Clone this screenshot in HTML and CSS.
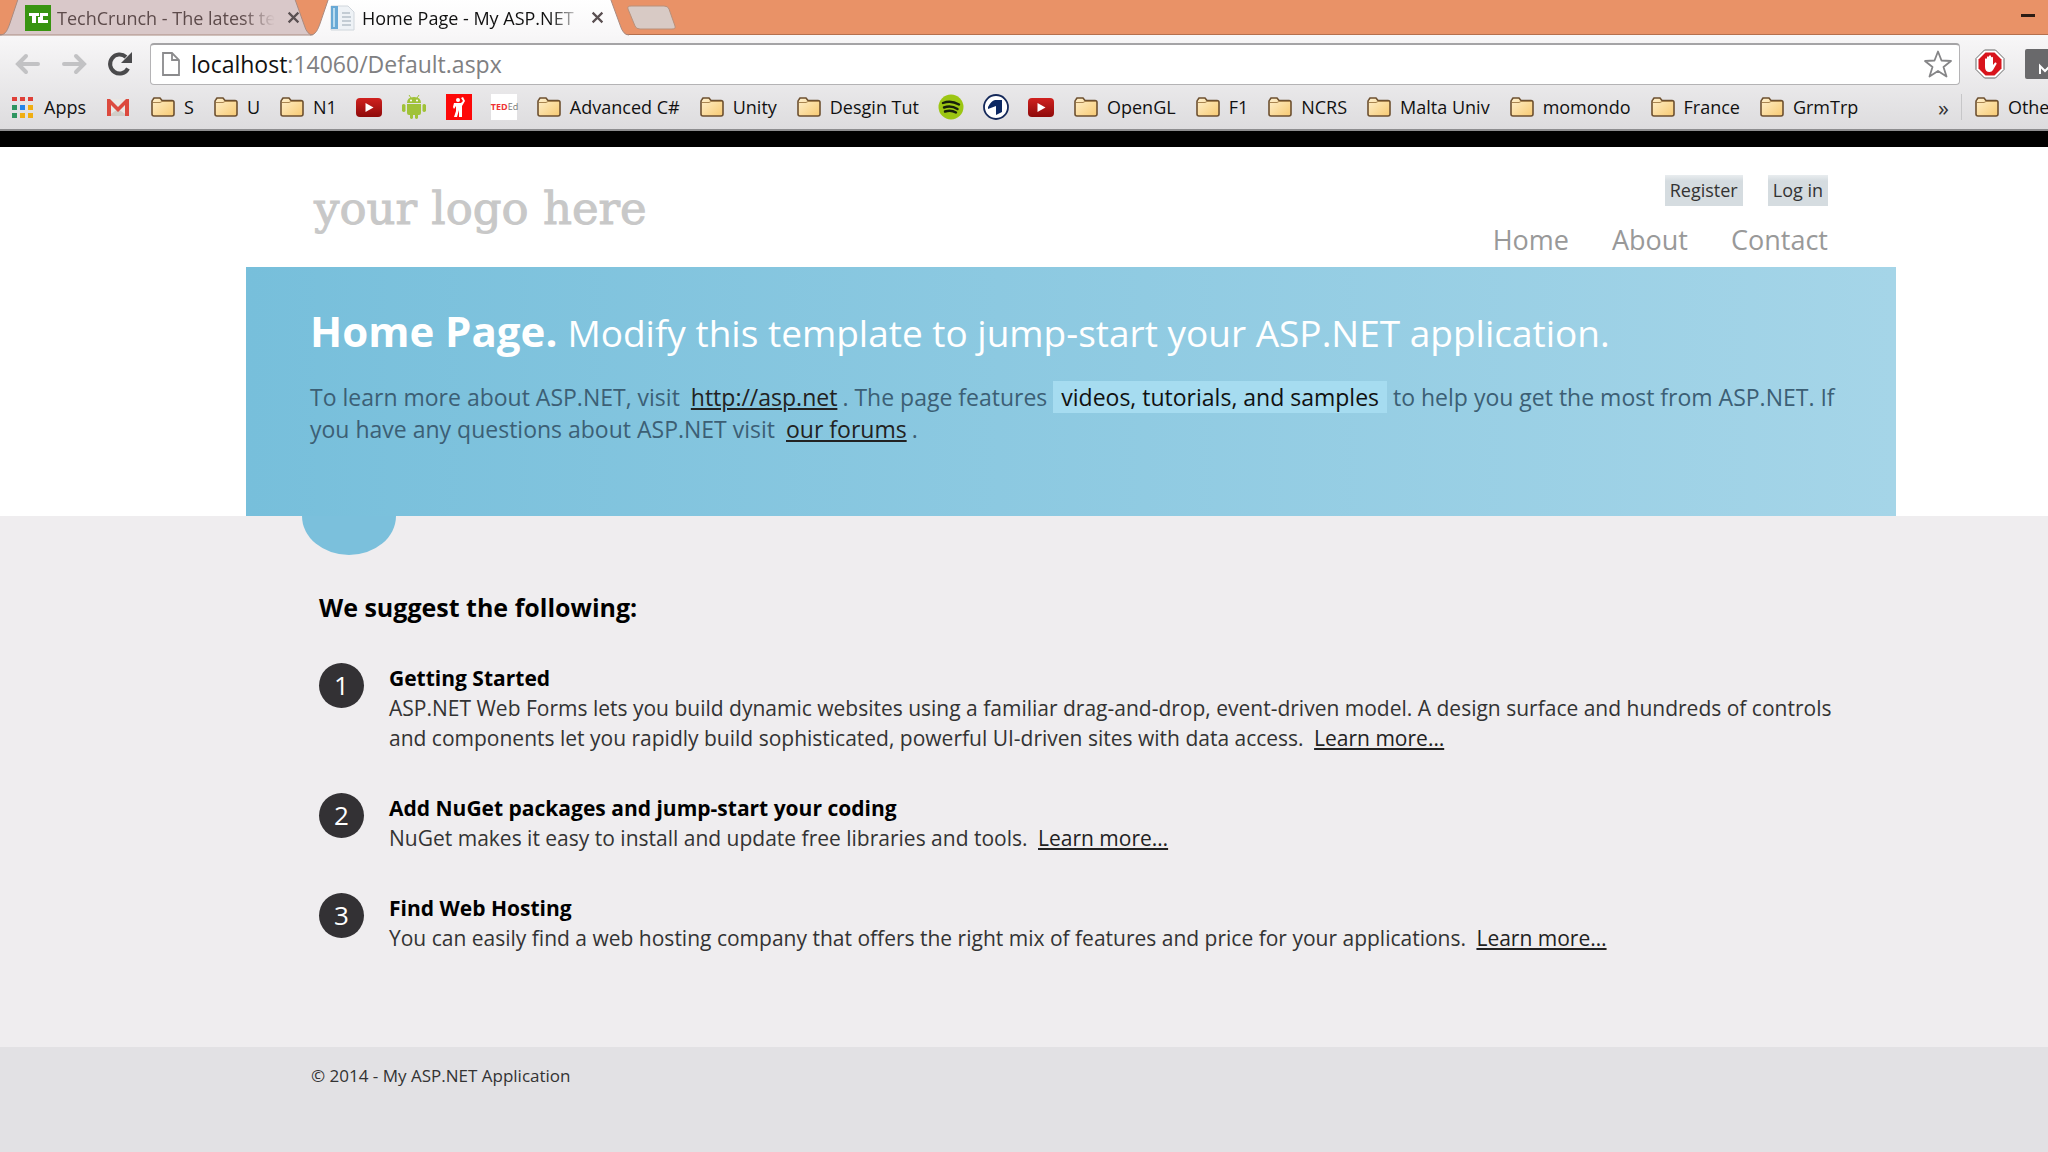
FILE: index.html
```html
<!DOCTYPE html>
<html lang="en">
<head>
<meta charset="utf-8">
<title>Home Page - My ASP.NET Application</title>
<link rel="stylesheet" href="styles.css">
</head>
<body>
<svg class="defs" aria-hidden="true">
  <defs>
    <linearGradient id="fold" x1="0" y1="0" x2="1" y2="1"><stop offset="0" stop-color="#fff0cd"/><stop offset="1" stop-color="#f7ca72"/></linearGradient>
    <linearGradient id="tube" x1="0" y1="0" x2="0" y2="1"><stop offset="0" stop-color="#d0211f"/><stop offset="1" stop-color="#8e0a0a"/></linearGradient>
    <linearGradient id="tabfill" x1="0" y1="0" x2="0" y2="1"><stop offset="0" stop-color="#ffffff"/><stop offset="1" stop-color="#f8f7f8"/></linearGradient>
  </defs>
  <symbol id="folder" viewBox="0 0 26 26"><path d="M2 20V7.500Q2 6.500 3 5.500L4 4H10L12 6.500H22Q24 6.500 24 8.500V20Q24 22 22 22H4Q2 22 2 20Z" fill="url(#fold)" stroke="#6d5030" stroke-width="1.600"/><path d="M3 8.500H10L12 7.500H23" fill="none" stroke="#a98550" stroke-width="1"/></symbol>
  <symbol id="youtube" viewBox="0 0 26 26"><rect x="0" y="4" width="26" height="19" rx="4" fill="url(#tube)"/><path d="M9.500 9V18L17.500 13.500Z" fill="#fff"/></symbol>
</svg>

<header class="browser">
  <nav class="tabs" aria-label="Tabs">
    <div class="tab tab-back">
      <svg class="tab-shape" viewBox="0 0 320 35" preserveAspectRatio="none" aria-hidden="true"><path d="M0 35C6 35 8 29 10 24L19 -2H304L314 25Q317 35 323 35Z" fill="#d9c8c9" stroke="#a98a80"/></svg>
      <svg class="fav" viewBox="0 0 26 26" aria-hidden="true"><path d="M0 0H26V26H0Z" fill="#389410"/><path d="M4 8H14V11H11V18H7V11H4ZM15 8H23V11H18V15H23V18H13V12H15Z" fill="#fff"/></svg>
      <a class="tab-title" href="#">TechCrunch - The latest te</a>
      <button class="close" aria-label="Close tab"><svg viewBox="0 0 12 12"><path d="M1.500 1.500L10.500 10.500M10.500 1.500L1.500 10.500"/></svg></button>
    </div>
    <div class="tab tab-front">
      <svg class="tab-shape" viewBox="0 0 320 35" preserveAspectRatio="none" aria-hidden="true"><path d="M0 35.500C6 35 8 29 10 24L19 -2H304L314 25Q317 35 323 35.500Z" fill="url(#tabfill)"/><path d="M0 35C6 35 8 29 10 24L19 -2M304 -2L314 25Q317 35 323 35" fill="none" stroke="#a98a80"/></svg>
      <svg class="fav" viewBox="0 0 26 26" aria-hidden="true"><path d="M1 1H18L24 7V25H1Z" fill="#eef2f6" stroke="#d0d6dc"/><path d="M1 1H8V24H1Z" fill="#69a9d5"/><path d="M3 3H5V22H3Z" fill="#b9dcf0"/><path d="M12 8H20M12 12H21M12 16H21M12 20H21" stroke="#c3ccd4" stroke-width="2"/></svg>
      <a class="tab-title" href="#">Home Page - My ASP.NET</a>
      <button class="close" aria-label="Close tab"><svg viewBox="0 0 12 12"><path d="M1.500 1.500L10.500 10.500M10.500 1.500L1.500 10.500"/></svg></button>
    </div>
    <button class="new-tab" aria-label="New tab"><svg viewBox="0 0 52 26"><path d="M5 1H38Q42 1 43 4L49 21Q50 24 46 24H14Q10 24 9 21L2 4Q1 1 5 1Z" fill="#d8cac5" stroke="#b9907a"/></svg></button>
    <button class="minimize" aria-label="Minimize"></button>
  </nav>

  <div class="toolbar">
    <button class="tool" aria-label="Back"><svg viewBox="0 0 28 28"><path d="M24 14H5M12 6L4 14L12 22" fill="none" stroke="#c2c2c4" stroke-width="4" stroke-linecap="round"/></svg></button>
    <button class="tool" aria-label="Forward"><svg viewBox="0 0 28 28"><path d="M4 14H23M16 6L24 14L16 22" fill="none" stroke="#c2c2c4" stroke-width="4" stroke-linecap="round"/></svg></button>
    <button class="tool" aria-label="Reload"><svg viewBox="0 0 28 28"><path d="M22 18.500A9.500 9.500 0 1 1 20 7" fill="none" stroke="#4a4a4c" stroke-width="4"/><path d="M26 2V13H15Z" fill="#4a4a4c"/></svg></button>
    <div class="omnibox">
      <svg class="doc" viewBox="0 0 20 26" aria-hidden="true"><path d="M2 2H11L18 9V24H2ZM11 2V9H18" fill="#fff" stroke="#8b8b8d" stroke-width="1.800"/></svg>
      <a class="url" href="#"><span>localhost</span>:14060/Default.aspx</a>
      <button class="star" aria-label="Bookmark this page"><svg viewBox="0 0 30 30"><path d="M15 2.500L18.500 11.500L28 12L20.500 18L23.500 27.500L15 22L6.500 27.500L9.500 18L2 12L11.500 11.500Z" fill="#fff" stroke="#858587" stroke-width="1.800" stroke-linejoin="round"/></svg></button>
    </div>
    <button class="ext" aria-label="Ad blocker"><svg viewBox="0 0 30 30"><path d="M9.500 1H20.500L29 9.500V20.500L20.500 29H9.500L1 20.500V9.500Z" fill="#fff" stroke="#666"/><path d="M10.500 3.500H19.500L26.500 10.500V19.500L19.500 26.500H10.500L3.500 19.500V10.500Z" fill="#d8141c"/><path d="M10 18V10Q11 8.500 12 10V14V8Q13 6.500 14 8V13V7Q15 5.500 16 7V13V8.500Q17 7 18 8.500V16L20 13.500Q22 13 21.500 15L18 21Q17 23 14.500 23Q10 23 10 18Z" fill="#fff"/></svg></button>
    <button class="ext-mail" aria-label="Mail"><svg viewBox="0 0 40 30"><path d="M0 2Q0 0 2 0H40V30H2Q0 30 0 28Z" fill="#69696b"/><path d="M15 25V17L20 22L25 17V25" fill="none" stroke="#fff" stroke-width="2"/></svg></button>
  </div>

  <nav class="bookmarks" aria-label="Bookmarks">
    <a href="#"><svg viewBox="0 0 26 26"><path d="M2 3H7V7H2ZM10 3H15V7H10ZM18 3H23V7H18Z" fill="#df4038"/><path d="M2 11H7V16H2Z" fill="#2e9560"/><path d="M10 11H15V16H10Z" fill="#2384ea"/><path d="M18 11H23V16H18ZM10 19H15V24H10ZM18 19H23V24H18Z" fill="#f0ae12"/><path d="M2 19H7V24H2Z" fill="#2e9560"/></svg>Apps</a>
    <a href="#" aria-label="Gmail"><svg viewBox="0 0 26 26"><path d="M2 5H24V22H2Z" fill="#e9e7e4"/><path d="M13 15L23 22H3Z" fill="#d0cec8"/><path d="M2 22V5H5L13 13L21 5H24V22H20V11L13 18L6 11V22Z" fill="#dc4a3e"/></svg></a>
    <a href="#"><svg><use href="#folder"/></svg>S</a>
    <a href="#"><svg><use href="#folder"/></svg>U</a>
    <a href="#"><svg><use href="#folder"/></svg>N1</a>
    <a href="#" aria-label="YouTube"><svg><use href="#youtube"/></svg></a>
    <a href="#" aria-label="Android"><svg viewBox="0 0 26 26"><path d="M6 9Q6 3 13 3Q20 3 20 9ZM6 10H20V19Q20 21 18 21H17V24Q15.500 26 14 24V21H12V24Q10.500 26 9 24V21H8Q6 21 6 19ZM1 11Q2.500 9 4.500 11V17Q3 19 1 17ZM21.500 11Q23 9 25 11V17Q23 19 21.500 17Z" fill="#a0c238"/><path d="M8 1L10 4M18 1L16 4" stroke="#a0c238"/><circle cx="10" cy="6.500" r="1" fill="#fff"/><circle cx="16" cy="6.500" r="1" fill="#fff"/></svg></a>
    <a href="#" aria-label="Runner"><svg viewBox="0 0 26 26"><path d="M0 0H26V26H0Z" fill="#fd0808"/><circle cx="12" cy="6" r="2" fill="#fff"/><path d="M8 9H15L17 7L15 4L17 3L19 7L16 12V23H13V16L11 23H8L10 17V12L8 15L7 13Z" fill="#fff"/></svg></a>
    <a href="#" class="ted" aria-label="TED-Ed"><span>TED<i>Ed</i></span></a>
    <a href="#"><svg><use href="#folder"/></svg>Advanced C#</a>
    <a href="#"><svg><use href="#folder"/></svg>Unity</a>
    <a href="#"><svg><use href="#folder"/></svg>Desgin Tut</a>
    <a href="#" aria-label="Spotify"><svg viewBox="0 0 26 26"><circle cx="13" cy="13" r="12.500" fill="#9cc613"/><path d="M5 9Q13 6 21 10.500M6 13.500Q13 11 19.500 15M7 17.500Q13 15.500 18 18.500" fill="none" stroke="#17200b" stroke-width="2.400" stroke-linecap="round"/></svg></a>
    <a href="#" aria-label="Das Erste"><svg viewBox="0 0 26 26"><circle cx="13" cy="13" r="12" fill="#fff" stroke="#15295a" stroke-width="1.800"/><path d="M5 13Q8 7 12 6H19V18L13 21V12L5 15Z" fill="#0c2862"/></svg></a>
    <a href="#" aria-label="YouTube"><svg><use href="#youtube"/></svg></a>
    <a href="#"><svg><use href="#folder"/></svg>OpenGL</a>
    <a href="#"><svg><use href="#folder"/></svg>F1</a>
    <a href="#"><svg><use href="#folder"/></svg>NCRS</a>
    <a href="#"><svg><use href="#folder"/></svg>Malta Univ</a>
    <a href="#"><svg><use href="#folder"/></svg>momondo</a>
    <a href="#"><svg><use href="#folder"/></svg>France</a>
    <a href="#"><svg><use href="#folder"/></svg>GrmTrp</a>
    <div class="overflow">
      <button class="more" aria-label="More bookmarks">»</button>
      <a class="other" href="#"><svg><use href="#folder"/></svg>Other</a>
    </div>
  </nav>
</header>

<div class="site">
  <header class="masthead">
    <a class="logo" href="#">your logo here</a>
    <div class="menus">
      <nav class="account" aria-label="Account"><a href="#">Register</a><a href="#">Log in</a></nav>
      <nav class="menu" aria-label="Main"><a href="#">Home</a><a href="#">About</a><a href="#">Contact</a></nav>
    </div>
  </header>

  <section class="featured">
    <div class="banner">
      <div class="title"><h1>Home Page.</h1><h2>Modify this template to jump-start your ASP.NET application.</h2></div>
      <p>To learn more about ASP.NET, visit <a href="#">http://asp.net</a>. The page features <mark>videos, tutorials, and samples</mark> to help you get the most from ASP.NET. If you have any questions about ASP.NET visit <a href="#">our forums</a>.</p>
    </div>
  </section>

  <main>
    <h3>We suggest the following:</h3>
    <ol>
      <li><h4>Getting Started</h4><p>ASP.NET Web Forms lets you build dynamic websites using a familiar drag-and-drop, event-driven model. A design surface and hundreds of controls and components let you rapidly build sophisticated, powerful UI-driven sites with data access. <a href="#">Learn more…</a></p></li>
      <li><h4>Add NuGet packages and jump-start your coding</h4><p>NuGet makes it easy to install and update free libraries and tools. <a href="#">Learn more…</a></p></li>
      <li><h4>Find Web Hosting</h4><p>You can easily find a web hosting company that offers the right mix of features and price for your applications. <a href="#">Learn more…</a></p></li>
    </ol>
  </main>

  <footer>© 2014 - My ASP.NET Application</footer>
</div>
</body>
</html>
```
FILE: styles.css
```css
* {
  box-sizing: border-box;
}

body {
  margin: 0;
  min-height: 100vh;
  display: flex;
  flex-direction: column;
  overflow-x: hidden;
  background: #e2e1e4;
  color: #333;
  font-family: "Open Sans", "Noto Sans", sans-serif;
}

h1, h2, h3, h4, p, ol {
  margin: 0;
  padding: 0;
}

button {
  flex: none;
  padding: 0;
  border: 0;
  background: none;
  font: inherit;
}

svg {
  display: block;
  flex: none;
}

.defs {
  position: absolute;
  width: 0;
  height: 0;
}

/* Browser window */
.browser {
  background: linear-gradient(#f8f7f8 35px, #dddcde);
  border-bottom: 2px solid #8d8d8f;
  white-space: nowrap;
  overflow: hidden;
}

.browser a {
  color: #111;
  text-decoration: none;
}

.tabs {
  display: flex;
  height: 35px;
  background: #e99267;
  border-bottom: 1px solid #b5704e;
}

.tab {
  position: relative;
  display: flex;
  align-items: center;
  flex: none;
  width: 310px;
  height: 35px;
  padding: 0 10px 0 25px;
  font-size: 18px;
}

.tab-front {
  width: 316px;
  padding: 0 22px 0 20px;
}

.tab-shape {
  position: absolute;
  left: 0;
  top: 0;
  width: 100%;
  height: 35px;
  overflow: visible;
}

.fav {
  position: relative;
  width: 26px;
  height: 26px;
}

.browser .tab-title {
  position: relative;
  flex: 1;
  min-width: 0;
  margin: 0 12px 0 6px;
  overflow: hidden;
  mask-image: linear-gradient(90deg, #000 85%, transparent);
}

.browser .tab-front .tab-title {
  margin-right: 8px;
}

.browser .tab-back .tab-title {
  color: #5d4b4b;
}

.close {
  position: relative;
}

.close svg {
  width: 13px;
  height: 13px;
  fill: none;
  stroke: #5a5052;
  stroke-width: 2;
}

.new-tab svg {
  width: 52px;
  height: 26px;
}

.new-tab {
  align-self: flex-start;
  padding-top: 5px;
}

.minimize {
  width: 14px;
  height: 3px;
  margin: 14px 13px 0 auto;
  background: #2c1c14;
}

.toolbar {
  display: flex;
  align-items: center;
  height: 57px;
}

.tool {
  padding-left: 14px;
}

.tool:nth-child(n+2) {
  padding-left: 18px;
}

.tool svg {
  width: 28px;
  height: 28px;
}

.omnibox {
  flex: 1;
  min-width: 0;
  display: flex;
  align-items: center;
  height: 42px;
  margin-left: 16px;
  padding: 0 6px 0 10px;
  background: #fff;
  border: 1px solid #b4b3b5;
  border-top: 2px solid #a5a4a6;
  border-radius: 4px;
}

.doc {
  width: 20px;
  height: 26px;
}

.browser .url {
  flex: 1;
  margin-left: 10px;
  font-size: 23px;
  color: #808082;
}

.url span {
  color: #111;
}

.star svg,
.ext svg {
  width: 30px;
  height: 30px;
}

.ext {
  margin: 0 20px 0 15px;
}

.ext-mail {
  width: 23px;
  overflow: hidden;
}

.ext-mail svg {
  width: 40px;
  height: 30px;
}

.bookmarks {
  display: flex;
  align-items: center;
  gap: 19px;
  height: 37px;
  padding: 0 0 7px 10px;
  font-size: 18px;
}

.bookmarks a {
  display: flex;
  align-items: center;
  gap: 8px;
  flex: none;
}

.bookmarks svg {
  width: 26px;
  height: 26px;
}

.ted span {
  width: 26px;
  height: 26px;
  background: #fff;
  color: #e33;
  font-size: 9px;
  font-weight: 700;
  line-height: 26px;
  text-align: center;
}

.ted i {
  color: #777;
  font-style: normal;
  font-weight: 400;
}

.overflow {
  flex: none;
  display: flex;
  align-items: center;
  width: 110px;
  margin-left: auto;
}

.more {
  font-size: 22px;
  line-height: 26px;
  color: #333;
}

.other {
  margin-left: 12px;
  padding-left: 12px;
  border-left: 1px solid #c6c6c8;
}

/* Site */
.site {
  flex: 1;
  border-top: 16px solid #000;
}

.masthead {
  display: flex;
  justify-content: space-between;
  height: 120px;
  padding: 0 220px 0 314px;
  background: #fff;
}

.masthead a {
  text-decoration: none;
}

.logo {
  padding-top: 32px;
  color: #c8c8c8;
  font: 45px/60px "DejaVu Serif", serif;
  -webkit-text-stroke: 1px #c8c8c8;
}

.menus {
  display: flex;
  flex-direction: column;
  align-items: flex-end;
}

.account {
  display: flex;
  gap: 25px;
  margin-top: 28px;
}

.account a {
  padding: 0 5px;
  background: linear-gradient(#e9edef, #d5dce0 6px);
  color: #333;
  font-size: 18px;
  line-height: 31px;
}

.menu {
  display: flex;
  gap: 43px;
  margin-top: 16px;
  font-size: 27px;
  line-height: 36px;
}

.menu a {
  color: #999;
}

.featured {
  padding: 0 152px 0 246px;
  background: #fff;
}

.banner {
  position: relative;
  min-height: 249px;
  padding: 39px 60px 0 64px;
  background: linear-gradient(90deg, #77bfdb, #a5d5e8);
  color: #3c5f75;
}

.banner::after {
  content: "";
  position: absolute;
  left: 56px;
  top: 100%;
  width: 94px;
  height: 39px;
  background: #7bc0dc;
  border-radius: 0 0 47px 47px / 0 0 39px 39px;
}

.title {
  display: flex;
  align-items: baseline;
  gap: 10px;
  color: #fff;
  white-space: nowrap;
}

.title h1 {
  font-size: 42px;
  line-height: 50px;
}

.title h2 {
  font-size: 37px;
  line-height: 50px;
  font-weight: 400;
}

.banner p {
  margin-top: 23px;
  font-size: 23px;
  line-height: 32px;
}

.banner a,
main a {
  margin: 0 5px;
  color: #222;
}

.banner mark {
  padding: 0 8px;
  background: #a6dcf0;
  color: #111;
}

main {
  padding: 72px 214px 94px 319px;
  background: #efedef;
}

h3 {
  color: #000;
  font-size: 25px;
  line-height: 38px;
}

ol {
  display: grid;
  gap: 40px;
  margin-top: 37px;
  list-style: none;
  counter-reset: step;
}

li {
  display: grid;
  grid-template-columns: 45px 1fr;
  column-gap: 25px;
  counter-increment: step;
  font-size: 21px;
  line-height: 30px;
}

li::before {
  content: counter(step);
  grid-row: 1 / 3;
  width: 45px;
  height: 45px;
  border-radius: 50%;
  background: #333134;
  color: #fff;
  font-size: 26px;
  line-height: 45px;
  text-align: center;
}

h4 {
  color: #000;
  font-size: 21px;
  line-height: 30px;
}

footer {
  padding: 14px 311px;
  font-size: 17px;
  line-height: 30px;
}
```
